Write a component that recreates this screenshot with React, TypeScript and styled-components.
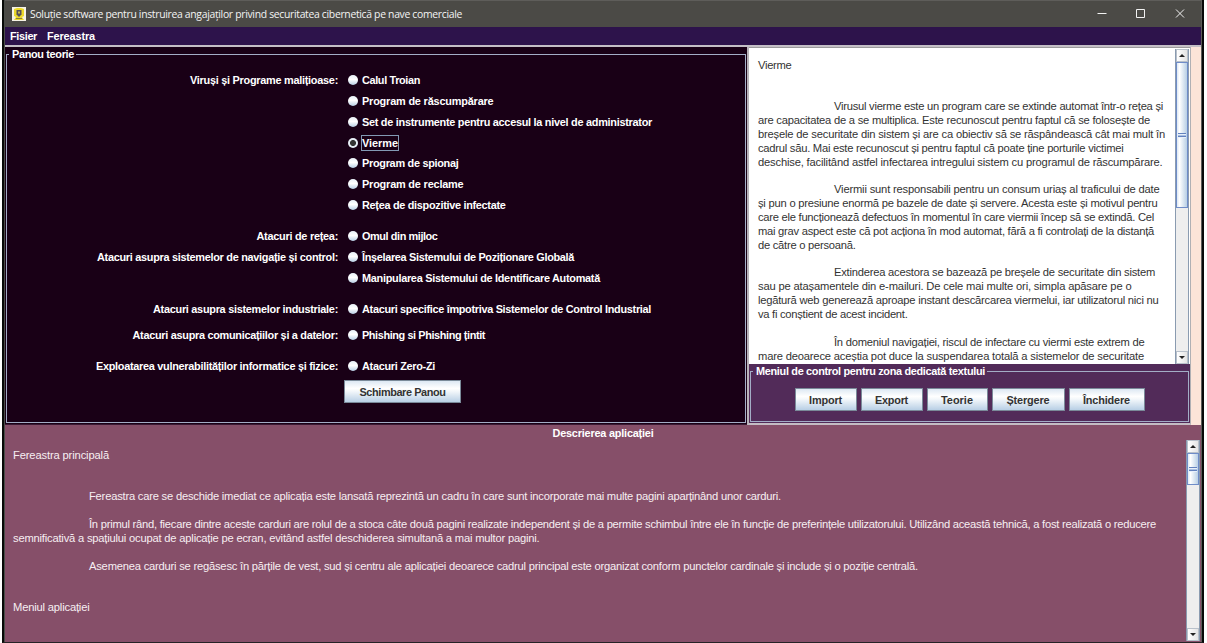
import React, { useLayoutEffect, useRef, useState } from "react";
import styled, { createGlobalStyle } from "styled-components";

const Global = createGlobalStyle`
  * { box-sizing: border-box; }
  body { margin: 0; background: #fff; font: 11.2px "Liberation Sans", sans-serif; overflow: hidden; }
`;

const FitBox = styled.span`
  display: inline-block;
  white-space: nowrap;
`;

/* Tracks a single line of text so that it spans the given width. */
function Fit({ w, children }: { w: number; children: string }) {
  const ref = useRef<HTMLSpanElement>(null);
  const [tracking, setTracking] = useState(0);
  useLayoutEffect(() => {
    const el = ref.current;
    if (!el) return;
    el.style.letterSpacing = "0px";
    const next = (w - el.getBoundingClientRect().width) / children.length;
    el.style.letterSpacing = `${next}px`;
    setTracking(next);
  }, [w, children]);
  return <FitBox ref={ref} style={{ letterSpacing: `${tracking}px` }}>{children}</FitBox>;
}

const Frame = styled.div`
  width: 1202px;
  height: 643px;
  margin-left: 2px;
  border-left: 2px solid #080a08;
  border-right: 2px solid #080808;
  border-bottom: 1px solid #262326;
`;
const Win = styled.div`
  height: 642px;
  border-left: 1px solid #4a4d49;
  border-right: 1px solid #5c5b58;
  display: flex;
  flex-direction: column;
  overflow: hidden;
`;
const TitleBar = styled.header`
  height: 27px;
  flex: none;
  background: #4b4a46;
  border-top: 1px solid #5e5d5a;
  color: #f4f4f4;
  display: flex;
  align-items: center;
  font: 10.4px "Open Sans", sans-serif;
`;
const Title = styled.span`
  margin-left: 4px;
`;
const Logo = styled.svg`
  width: 14px;
  height: 14px;
  margin-left: 7px;
`;
const Controls = styled.svg`
  width: 90px;
  height: 12px;
  margin-left: auto;
  margin-right: 16px;
`;
const MenuBar = styled.nav`
  height: 18px;
  flex: none;
  background: #2d134b;
  display: flex;
  align-items: center;
  padding-left: 5px;
  gap: 10px;
`;
const Bold = styled.span<{ $dark?: boolean }>`
  font-weight: bold;
  font-size: 10.9px;
  line-height: 14px;
  height: 14px;
  color: ${(p) => (p.$dark ? "#333" : "#fff")};
  white-space: nowrap;
  display: block;
`;
const Main = styled.main`
  height: 380px;
  flex: none;
  display: flex;
  border-top: 2px solid #c4bfc6;
  background: #fce4d8;
`;
const Theory = styled.section`
  width: 742px;
  background: #190016;
  padding: 0 1px 1px 1px;
  border-bottom: 1px solid #3c1a34;
`;
const Fieldset = styled.fieldset<{ $pad: string }>`
  margin: 0;
  min-width: 0;
  height: 100%;
  border: 1px solid #a3adc6;
  padding: ${(p) => p.$pad};
`;
const Legend = styled.legend`
  margin-left: 2px;
  padding: 0 2px 0 3px;
  height: 14px;
`;
const Row = styled.div<{ $gap?: number }>`
  display: grid;
  grid-template-columns: 331px 1fr;
  column-gap: 10px;
  height: 20.75px;
  margin-top: ${(p) => p.$gap ?? 0}px;
  align-items: center;
`;
const Label = styled.div`
  display: flex;
  justify-content: flex-end;
`;
const Option = styled.label`
  display: flex;
  align-items: center;
  gap: 4px;
`;
const Dot = styled.i<{ $on?: boolean }>`
  width: 10px;
  height: 10px;
  border-radius: 50%;
  background: ${(p) =>
    p.$on
      ? "radial-gradient(circle, #333 0 2.6px, #e6eef5 3.4px)"
      : "linear-gradient(#e8f0f7, #fff 45%, #b8cfe5)"};
`;
const Focus = styled.span<{ $on?: boolean }>`
  outline: ${(p) => (p.$on ? "1px solid #8299b4" : "none")};
`;
const Button = styled.button<{ $w: number }>`
  width: ${(p) => p.$w}px;
  height: 23px;
  padding: 0;
  border: 1px solid #7a8a99;
  background: linear-gradient(#dde8f3, #fff 35%, #f4f8fb 48%, #b8cfe5);
  font: inherit;
  display: flex;
  justify-content: center;
  align-items: center;
`;
const Action = styled.div`
  padding: 4px 0 0 337px;
`;
const Side = styled.section`
  width: 444px;
  border-left: 2px solid #b9b3ba;
  border-right: 1px solid #b0b0b4;
  border-bottom: 2px solid #c3bcc3;
  display: flex;
  flex-direction: column;
`;
const Reader = styled.div`
  height: 317px;
  background: #fff;
  border-top: 1px solid #9b9b9b;
  padding: 1px 1px 0 0;
  display: flex;
  overflow: hidden;
`;
const ReaderText = styled.div`
  flex: 1;
  padding: 9.8px 0 0 9px;
  color: #333;
`;
const Line = styled.p<{ $in?: number }>`
  margin: 0 0 0 ${(p) => p.$in ?? 0}px;
  height: 13.85px;
  line-height: 13.85px;
  white-space: nowrap;
`;
const Bar = styled.div`
  width: 14px;
  flex: none;
  display: flex;
  flex-direction: column;
  background: #eee;
  border-left: 1px solid #8a9bb0;
  border-right: 1px solid #8a9bb0;
`;
const Arrow = styled.div<{ $down?: boolean }>`
  height: 13px;
  flex: none;
  background: linear-gradient(90deg, #fff, #e4e4e4);
  border: 1px solid #b8c0ca;
  display: grid;
  place-items: center;
  &::after {
    content: "";
    border: 3.5px solid transparent;
    border-top-width: ${(p) => (p.$down ? 3.5 : 0)}px;
    border-bottom-width: ${(p) => (p.$down ? 0 : 3.5)}px;
    border-${(p) => (p.$down ? "top" : "bottom")}-color: #222;
  }
`;
const Thumb = styled.div<{ $h: number }>`
  height: ${(p) => p.$h}px;
  border: 1px solid #6f8cc8;
  background: linear-gradient(90deg, #dce8f4, #fff 25%, #b8cfe5);
  display: grid;
  place-items: center;
  &::after {
    content: "";
    width: 8px;
    height: 5px;
    background: linear-gradient(#6382bf 0 1px, #e8f0fa 1px 2px, #a9bfe2 2px 3px, #6382bf 3px 4px, #e8f0fa 4px);
  }
`;
const Track = styled.div`
  flex: 1;
`;
const Control = styled.div`
  flex: 1;
  background: #522b59;
  padding: 0 1px 1px 1px;
`;
const Buttons = styled.div`
  display: flex;
  justify-content: center;
  gap: 4px;
`;
const Bottom = styled.section`
  flex: 1;
  background: #864f69;
  display: flex;
  flex-direction: column;
  min-height: 0;
`;
const Heading = styled.div`
  height: 15px;
  padding-top: 1px;
  display: flex;
  justify-content: center;
`;
const Doc = styled.div`
  flex: 1;
  display: flex;
  color: #f6eef2;
  padding: 0 1px 1px 0;
`;
const DocText = styled.div`
  flex: 1;
  min-width: 0;
  padding: 8.9px 0 0 8px;
`;

type Item = { label?: [string, number]; text: string; w: number; on?: boolean; gap?: number };
const items: Item[] = [
  { label: ["Viruși și Programe malițioase:", 148], text: "Calul Troian", w: 58 },
  { text: "Program de răscumpărare", w: 131.5 },
  { text: "Set de instrumente pentru accesul la nivel de administrator", w: 290 },
  { text: "Vierme", w: 36, on: true },
  { text: "Program de spionaj", w: 96.5 },
  { text: "Program de reclame", w: 101.5 },
  { text: "Rețea de dispozitive infectate", w: 143.5 },
  { label: ["Atacuri de rețea:", 81.5], text: "Omul din mijloc", w: 75.5, gap: 10.5 },
  { label: ["Atacuri asupra sistemelor de navigație și control:", 241], text: "Înșelarea Sistemului de Poziționare Globală", w: 212 },
  { text: "Manipularea Sistemului de Identificare Automată", w: 238 },
  { label: ["Atacuri asupra sistemelor industriale:", 185], text: "Atacuri specifice împotriva Sistemelor de Control Industrial", w: 289, gap: 10.5 },
  { label: ["Atacuri asupra comunicațiilor și a datelor:", 205.5], text: "Phishing si Phishing țintit", w: 123, gap: 5 },
  { label: ["Exploatarea vulnerabilităților informatice și fizice:", 242], text: "Atacuri Zero-Zi", w: 73, gap: 10.5 },
];

type L = [string, number?, number?];
const article: L[] = [
  ["Vierme", 33.5],
  [""],
  [""],
  ["Virusul vierme este un program care se extinde automat într-o rețea și", 329, 76],
  ["are capacitatea de a se multiplica. Este recunoscut pentru faptul că se folosește de", 392],
  ["breșele de securitate din sistem și are ca obiectiv să se răspândească cât mai mult în", 407],
  ["cadrul său. Mai este recunoscut și pentru faptul că poate ține porturile victimei", 365.5],
  ["deschise, facilitând astfel infectarea intregului sistem cu programul de răscumpărare.", 404.5],
  [""],
  ["Viermii sunt responsabili pentru un consum uriaș al traficului de date", 325.5, 76],
  ["și pun o presiune enormă pe bazele de date și servere. Acesta este și motivul pentru", 399.5],
  ["care ele funcționează defectuos în momentul în care viermii încep să se extindă. Cel", 396],
  ["mai grav aspect este că pot acționa în mod automat, fără a fi controlați de la distanță", 396],
  ["de către o persoană.", 97.5],
  [""],
  ["Extinderea acestora se bazează pe breșele de securitate din sistem", 321, 76],
  ["sau pe atașamentele din e-mailuri. De cele mai multe ori, simpla apăsare pe o", 373.5],
  ["legătură web generează aproape instant descărcarea viermelui, iar utilizatorul nici nu", 400.5],
  ["va fi conștient de acest incident.", 149.5],
  [""],
  ["În domeniul navigației, riscul de infectare cu viermi este extrem de", 310.5, 76],
  ["mare deoarece aceștia pot duce la suspendarea totală a sistemelor de securitate", 386],
];
const description: L[] = [
  ["Fereastra principală", 96],
  [""],
  [""],
  ["Fereastra care se deschide imediat ce aplicația este lansată reprezintă un cadru în care sunt incorporate mai multe pagini aparținând unor carduri.", 692, 76],
  [""],
  ["În primul rând, fiecare dintre aceste carduri are rolul de a stoca câte două pagini realizate independent și de a permite schimbul între ele în funcție de preferințele utilizatorului. Utilizând această tehnică, a fost realizată o reducere", 1067, 76],
  ["semnificativă a spațiului ocupat de aplicație pe ecran, evitând astfel deschiderea simultană a mai multor pagini.", 526.5],
  [""],
  ["Asemenea carduri se regăsesc în părțile de vest, sud și centru ale aplicației deoarece cadrul principal este organizat conform punctelor cardinale și include și o poziție centrală.", 829, 76],
  [""],
  [""],
  ["Meniul aplicației", 76.5],
];
const buttons: [string, number, number][] = [
  ["Import", 62, 33],
  ["Export", 62, 33],
  ["Teorie", 61, 32],
  ["Ștergere", 73, 43],
  ["Închidere", 76, 47],
];

function Lines({ of }: { of: L[] }) {
  return (
    <>
      {of.map(([t, w, i], k) => (
        <Line key={k} $in={i}>{w && <Fit w={w}>{t}</Fit>}</Line>
      ))}
    </>
  );
}

function ScrollBar({ thumb }: { thumb: number }) {
  return (
    <Bar>
      <Arrow />
      <Thumb $h={thumb} />
      <Track />
      <Arrow $down />
    </Bar>
  );
}

export default function App() {
  return (
    <Frame>
      <Global />
      <Win>
        <TitleBar>
          <Logo viewBox="0 0 14 14">
            <rect width="14" height="14" fill="#f5f2e6" />
            <path d="M2 2l3-1h4l3 1v7l-2 1 2 3H2l2-3-2-1z" fill="#ecd92a" />
            <path d="M4.500 3h5v4.500L7 10 4.500 7.500z" fill="#55505c" />
            <path d="M6 4.500h2v2H6z" fill="#c9b94c" />
            <path d="M4 11.500h6" stroke="#8a7f3a" />
          </Logo>
          <Title><Fit w={432}>Soluție software pentru instruirea angajaților privind securitatea cibernetică pe nave comerciale</Fit></Title>
          <Controls viewBox="0 0 90 12" fill="none" stroke="#f2f2f2">
            <path d="M2.500 5.500h9M41.500 1.500h8v8h-8zM81 1.500l8 8M89 1.500l-8 8" />
          </Controls>
        </TitleBar>
        <MenuBar>
          <Bold><Fit w={27}>Fisier</Fit></Bold>
          <Bold><Fit w={48}>Fereastra</Fit></Bold>
        </MenuBar>
        <Main>
          <Theory>
            <Fieldset $pad="9px 0 0 0">
              <Legend><Bold><Fit w={62}>Panou teorie</Fit></Bold></Legend>
              {items.map((it) => (
                <Row key={it.text} $gap={it.gap}>
                  <Label>{it.label && <Bold><Fit w={it.label[1]}>{it.label[0]}</Fit></Bold>}</Label>
                  <Option>
                    <Dot $on={it.on} />
                    <Focus $on={it.on}><Bold><Fit w={it.w}>{it.text}</Fit></Bold></Focus>
                  </Option>
                </Row>
              ))}
              <Action>
                <Button $w={117}><Bold $dark><Fit w={86}>Schimbare Panou</Fit></Bold></Button>
              </Action>
            </Fieldset>
          </Theory>
          <Side>
            <Reader>
              <ReaderText><Lines of={article} /></ReaderText>
              <ScrollBar thumb={146} />
            </Reader>
            <Control>
              <Fieldset $pad="10px 0 0 0">
                <Legend><Bold><Fit w={229}>Meniul de control pentru zona dedicată textului</Fit></Bold></Legend>
                <Buttons>
                  {buttons.map(([t, w, tw]) => (
                    <Button key={t} $w={w}><Bold $dark><Fit w={tw}>{t}</Fit></Bold></Button>
                  ))}
                </Buttons>
              </Fieldset>
            </Control>
          </Side>
        </Main>
        <Bottom>
          <Heading><Bold><Fit w={101}>Descrierea aplicației</Fit></Bold></Heading>
          <Doc>
            <DocText><Lines of={description} /></DocText>
            <ScrollBar thumb={32} />
          </Doc>
        </Bottom>
      </Win>
    </Frame>
  );
}
